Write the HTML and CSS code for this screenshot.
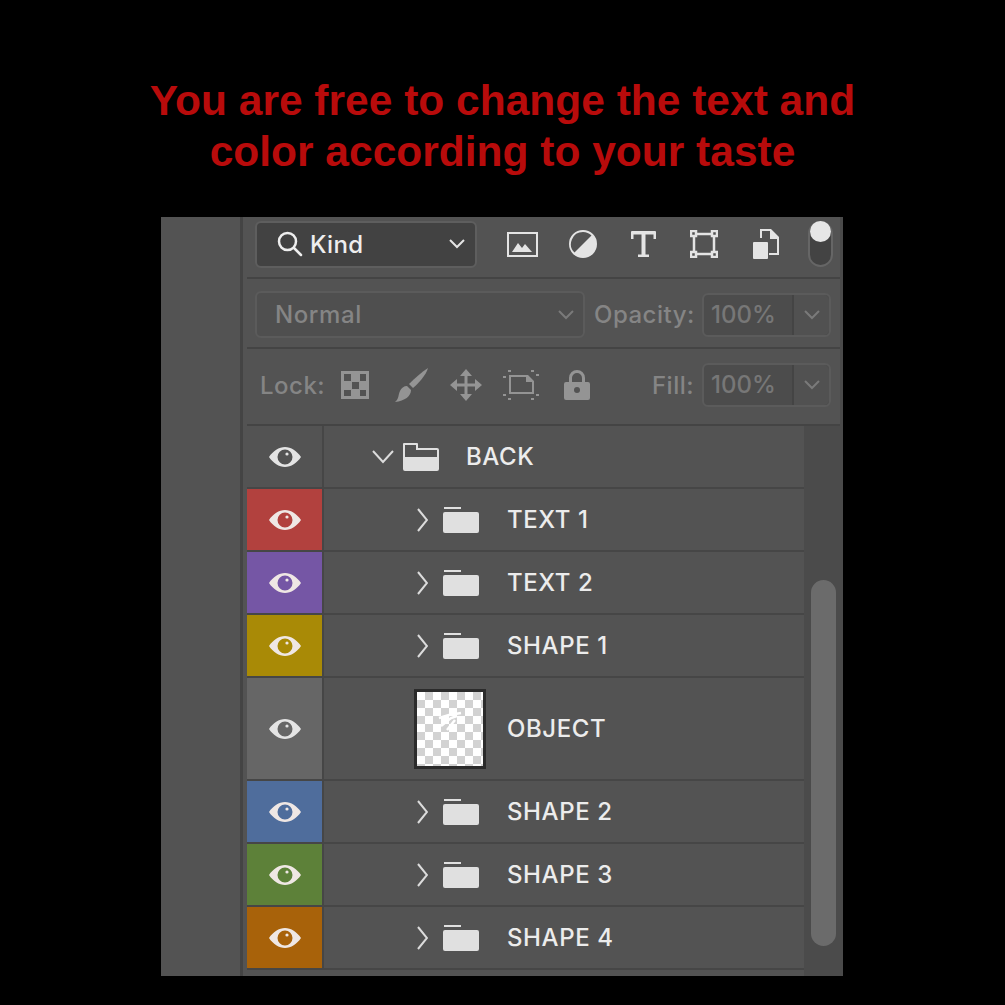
FILE: index.html
```html
<!DOCTYPE html>
<html lang="en">
<head>
  <meta charset="UTF-8">
  <title>Layers panel</title>
  <link rel="stylesheet" href="styles.css">
</head>
<body>

  <!-- Icon symbols -->
  <svg class="defs" width="0" height="0">
    <symbol id="eye" viewBox="0 0 32 20">
      <path fill-rule="evenodd" d="M0 10C4 4 10 0 16 0s12 4 16 10c-4 6-10 10-16 10S4 16 0 10zM16 2.500a7.500 7.500 0 1 0 0 15 7.500 7.500 0 0 0 0-15z"/>
      <circle cx="18" cy="7" r="1.600"/>
    </symbol>
    <symbol id="folder" viewBox="0 0 36 28">
      <path d="M1 1h17v2H1z"/>
      <path d="M2 6h32a2 2 0 0 1 2 2v17a2 2 0 0 1-2 2H2a2 2 0 0 1-2-2V8a2 2 0 0 1 2-2z"/>
    </symbol>
    <symbol id="folder-open" viewBox="0 0 36 28">
      <path fill-rule="evenodd" d="M1 0h13a1 1 0 0 1 1 1v4h19a2 2 0 0 1 2 2v19a2 2 0 0 1-2 2H2a2 2 0 0 1-2-2V1a1 1 0 0 1 1-1zm1 2v12h32V7H13V2z"/>
    </symbol>
  </svg>

  <h1 class="title">You are free to change the text and<br>color according to your taste</h1>

  <div class="panel">
    <div class="side"></div>
    <div class="main">

      <!-- Filter row -->
      <div class="bar bar-filter">
        <div class="select select-kind">
          <svg class="search" viewBox="0 0 26 26" width="26" height="26"><circle cx="10.500" cy="10.500" r="8.500"/><path d="M17 17l7 7"/></svg>
          <span>Kind</span>
          <svg class="caret" viewBox="0 0 16 10" width="16" height="10"><path d="M1 1l7 7 7-7"/></svg>
        </div>
        <div class="filters">
          <div class="cell">
            <svg viewBox="0 0 31 25" width="31" height="25" class="ico"><path fill-rule="evenodd" d="M0 0h31v25H0zM2 2v21h27V2z"/><path d="M5 20l6-9 4 5 3-4 7 8z"/></svg>
          </div>
          <div class="cell">
            <svg viewBox="0 0 28 28" width="28" height="28" class="ico"><path fill-rule="evenodd" d="M14 0a14 14 0 1 1 0 28 14 14 0 0 1 0-28zm0 2a12 12 0 0 0-8.500 20.500L22.500 5.500A12 12 0 0 0 14 2z"/></svg>
          </div>
          <div class="cell">
            <svg viewBox="0 0 25 26" width="25" height="26" class="ico"><path d="M1 0h23a1 1 0 0 1 1 1v7h-2.500V3.500H14.500v20H18V26H7v-2.500h3.500v-20H2.500V8H0V1a1 1 0 0 1 1-1z"/></svg>
          </div>
          <div class="cell">
            <svg viewBox="0 0 28 28" width="28" height="28" class="ico ico-line"><path d="M5 4h18M5 24h18M4 5v18M24 5v18"/><rect x="1" y="1" width="5" height="5"/><rect x="22" y="1" width="5" height="5"/><rect x="1" y="22" width="5" height="5"/><rect x="22" y="22" width="5" height="5"/></svg>
          </div>
          <div class="cell cell-doc">
            <svg viewBox="0 0 26 30" width="26" height="30" class="ico"><path fill-rule="evenodd" d="M7 0h11l8 8v18H16v-2h8V10h-7V2H9v7H7z"/><rect x="0" y="13" width="15" height="17" rx="1"/></svg>
          </div>
        </div>
        <div class="toggle"><div class="knob"></div></div>
      </div>

      <!-- Blend mode row -->
      <div class="bar bar-blend">
        <div class="select select-blend">
          <span>Normal</span>
          <svg class="caret" viewBox="0 0 16 10" width="16" height="10"><path d="M1 1l7 7 7-7"/></svg>
        </div>
        <span class="dim-label label-opacity">Opacity:</span>
        <div class="percent">
          <span class="percent-val">100%</span>
          <span class="percent-btn"><svg class="caret" viewBox="0 0 16 10" width="16" height="10"><path d="M1 1l7 7 7-7"/></svg></span>
        </div>
      </div>

      <!-- Lock row -->
      <div class="bar bar-lock">
        <span class="dim-label">Lock:</span>
        <div class="locks">
          <div class="lock-cell">
            <svg viewBox="0 0 28 28" width="28" height="28" class="lock-ico"><path fill-rule="evenodd" d="M0 0h28v28H0zM3 3v7h7V3zm8 8v7h7v-7zm8-8v7h6V3zM3 19v6h7v-6zm16 0v6h6v-6z"/></svg>
          </div>
          <div class="lock-cell">
            <svg viewBox="0 0 34 34" width="34" height="34" class="lock-ico lock-brush"><path d="M33 0c-2 7-9 15-15 20l-4-4C20 10 27 4 33 0z"/><path d="M12 18l4 4c0 6-6 11-16 12 4-3 3-7 5-11 1-3 4-5 7-5z"/></svg>
          </div>
          <div class="lock-cell">
            <svg viewBox="0 0 32 32" width="32" height="32" class="lock-ico"><path d="M16 0l6 7h-4.500v7.500H25V10l7 6-7 6v-4.500h-7.500V25H22l-6 7-6-7h4.500v-7.500H7V22l-7-6 7-6v4.500h7.500V7H10z"/></svg>
          </div>
          <div class="lock-cell">
            <svg viewBox="0 0 36 30" width="36" height="30" class="lock-ico"><path fill-rule="evenodd" d="M6 5h19l6 6v13H6zm2 2v15h21V12h-6V7z"/><path d="M5 0h3v2H5zM28 0h3v2h-3zM0 6h3v2H0zM33 4h3v2h-3zM0 24h3v2H0zM33 24h3v2h-3zM5 28h3v2H5zM28 28h3v2h-3z"/></svg>
          </div>
          <div class="lock-cell">
            <svg viewBox="0 0 26 30" width="26" height="30" class="lock-ico"><path fill-rule="evenodd" d="M13 0a8 8 0 0 1 8 8v4h3a2 2 0 0 1 2 2v14a2 2 0 0 1-2 2H2a2 2 0 0 1-2-2V14a2 2 0 0 1 2-2h3V8a8 8 0 0 1 8-8zm0 3a5 5 0 0 0-5 5v4h10V8a5 5 0 0 0-5-5zm0 14a3 3 0 1 0 0 6 3 3 0 0 0 0-6z"/></svg>
          </div>
        </div>
        <span class="dim-label label-fill">Fill:</span>
        <div class="percent">
          <span class="percent-val">100%</span>
          <span class="percent-btn"><svg class="caret" viewBox="0 0 16 10" width="16" height="10"><path d="M1 1l7 7 7-7"/></svg></span>
        </div>
      </div>

      <!-- Layers -->
      <div class="layers">
        <div class="list">
          <div class="row">
            <div class="vis"><svg class="eye"><use href="#eye"/></svg></div>
            <div class="layer layer-group">
              <svg class="open" viewBox="0 0 22 14" width="22" height="14"><path d="M1 1l10 11L21 1"/></svg>
              <svg class="folder-open"><use href="#folder-open"/></svg>
              <span class="name">BACK</span>
            </div>
          </div>
          <div class="row">
            <div class="vis vis-red"><svg class="eye"><use href="#eye"/></svg></div>
            <div class="layer">
              <svg class="closed" viewBox="0 0 11 24" width="11" height="24"><path d="M1 1l9 11-9 11"/></svg>
              <svg class="folder"><use href="#folder"/></svg>
              <span class="name">TEXT 1</span>
            </div>
          </div>
          <div class="row">
            <div class="vis vis-purple"><svg class="eye"><use href="#eye"/></svg></div>
            <div class="layer">
              <svg class="closed" viewBox="0 0 11 24" width="11" height="24"><path d="M1 1l9 11-9 11"/></svg>
              <svg class="folder"><use href="#folder"/></svg>
              <span class="name">TEXT 2</span>
            </div>
          </div>
          <div class="row">
            <div class="vis vis-yellow"><svg class="eye"><use href="#eye"/></svg></div>
            <div class="layer">
              <svg class="closed" viewBox="0 0 11 24" width="11" height="24"><path d="M1 1l9 11-9 11"/></svg>
              <svg class="folder"><use href="#folder"/></svg>
              <span class="name">SHAPE 1</span>
            </div>
          </div>
          <div class="row row-object">
            <div class="vis vis-gray"><svg class="eye"><use href="#eye"/></svg></div>
            <div class="layer layer-object">
              <div class="thumb">
                <svg viewBox="0 0 66 74" width="66" height="74" class="scribble"><path d="M22 26l10-3 12-2M24 34l10-8 6-2M30 38l8-10"/></svg>
              </div>
              <span class="name">OBJECT</span>
            </div>
          </div>
          <div class="row">
            <div class="vis vis-blue"><svg class="eye"><use href="#eye"/></svg></div>
            <div class="layer">
              <svg class="closed" viewBox="0 0 11 24" width="11" height="24"><path d="M1 1l9 11-9 11"/></svg>
              <svg class="folder"><use href="#folder"/></svg>
              <span class="name">SHAPE 2</span>
            </div>
          </div>
          <div class="row">
            <div class="vis vis-green"><svg class="eye"><use href="#eye"/></svg></div>
            <div class="layer">
              <svg class="closed" viewBox="0 0 11 24" width="11" height="24"><path d="M1 1l9 11-9 11"/></svg>
              <svg class="folder"><use href="#folder"/></svg>
              <span class="name">SHAPE 3</span>
            </div>
          </div>
          <div class="row">
            <div class="vis vis-orange"><svg class="eye"><use href="#eye"/></svg></div>
            <div class="layer">
              <svg class="closed" viewBox="0 0 11 24" width="11" height="24"><path d="M1 1l9 11-9 11"/></svg>
              <svg class="folder"><use href="#folder"/></svg>
              <span class="name">SHAPE 4</span>
            </div>
          </div>
        </div>
        <div class="scroll"><div class="thumb-bar"></div></div>
      </div>

    </div>
  </div>

</body>
</html>
```

FILE: styles.css
```css
html, body {
  margin: 0;
  height: 100%;
  background: #000;
  overflow: hidden;
}

.defs {
  display: block;
  height: 0;
}

.title {
  margin: 0;
  padding-top: 75px;
  height: 142px;
  font: bold 42.500px/51px "Liberation Sans", Arial, sans-serif;
  color: #b80b0b;
  text-align: center;
}

.panel {
  display: flex;
  width: 682px;
  height: 759px;
  margin-left: 161px;
  background: #535353;
  overflow: hidden;
  font-family: Inter, "Noto Sans", sans-serif;
}

.side {
  width: 79px;
  flex: none;
  border-right: 3px solid #444;
}

.main {
  flex: 1;
  min-width: 0;
  margin-left: 4px;
  display: flex;
  flex-direction: column;
  border-right: 3px solid #4a4a4a;
}

/* top bars */
.bar {
  display: flex;
  align-items: center;
  flex: none;
  box-sizing: border-box;
  border-bottom: 2px solid #444;
  padding-left: 8px;
}

.bar-filter {
  height: 62px;
  padding-bottom: 6px;
}

.bar-blend {
  height: 70px;
  padding-top: 3px;
}

.bar-lock {
  height: 77px;
  padding-left: 13px;
  padding-bottom: 3px;
}

.select {
  display: flex;
  align-items: center;
  box-sizing: border-box;
  height: 47px;
  border-radius: 6px;
  font-size: 24px;
  letter-spacing: 0.3px;
}

.select-kind {
  width: 222px;
  padding: 0 10px 0 20px;
  background: #424242;
  border: 2px solid #5e5e5e;
  color: #eee;
  font-weight: 500;
}

.select-blend {
  width: 330px;
  padding: 0 9px 0 18px;
  background: #4f4f4f;
  border: 2px solid #5b5b5b;
  color: #858585;
  font-weight: 500;
  letter-spacing: 0.6px;
}

.select .caret {
  margin-left: auto;
}

.search {
  margin-right: 7px;
  fill: none;
  stroke: #eee;
  stroke-width: 2.500;
  stroke-linecap: round;
}

.caret {
  fill: none;
  stroke: #e4e4e4;
  stroke-width: 2;
}

.select-blend .caret, .percent .caret {
  stroke: #7a7a7a;
}

.filters {
  display: flex;
  margin-left: 15px;
}

.cell {
  width: 60.500px;
  display: flex;
  align-items: center;
  justify-content: center;
}

.cell-doc {
  margin-left: 2px;
}

.ico {
  fill: #e4e4e4;
}

.ico-line {
  fill: none;
  stroke: #e4e4e4;
  stroke-width: 2.500;
}

.toggle {
  position: relative;
  box-sizing: border-box;
  width: 25px;
  height: 46px;
  margin-left: 11.500px;
  background: #434343;
  border: 2px solid #666;
  border-radius: 13px;
}

.knob {
  position: absolute;
  left: 0;
  top: -2px;
  width: 21px;
  height: 21px;
  border-radius: 50%;
  background: #e6e6e6;
}

.dim-label {
  font-size: 24px;
  font-weight: 500;
  letter-spacing: 0.5px;
  color: #858585;
}

.label-opacity {
  margin-left: 9px;
  width: 108px;
}

.label-fill {
  margin-left: auto;
  margin-right: 8px;
}

.percent {
  display: flex;
  box-sizing: border-box;
  width: 129px;
  height: 44px;
  background: #4c4c4c;
  border: 2px solid #5b5b5b;
  border-radius: 6px;
  color: #777;
  font-size: 24px;
  font-weight: 500;
}

.bar-lock .percent {
  margin-right: 9px;
}

.percent-val {
  width: 90px;
  flex: none;
  padding-left: 7px;
  box-sizing: border-box;
  line-height: 40px;
  border-right: 2px solid #444;
}

.percent-btn {
  flex: 1;
  display: flex;
  align-items: center;
  justify-content: center;
  background: #515151;
  border-radius: 0 5px 5px 0;
}

.locks {
  display: flex;
  margin-left: 2px;
}

.lock-cell {
  width: 55.500px;
  display: flex;
  align-items: center;
  justify-content: center;
}

.lock-ico {
  fill: #949494;
}

.lock-brush {
  margin-left: 4px;
}

/* layer list */
.layers {
  flex: 1;
  display: flex;
  min-height: 0;
}

.list {
  flex: 1;
  min-width: 0;
}

.row {
  display: flex;
  height: 61px;
  border-bottom: 2px solid #464646;
}

.row-object {
  height: 101px;
}

.vis {
  width: 75px;
  flex: none;
  display: flex;
  align-items: center;
  justify-content: center;
  border-right: 2px solid #464646;
}

.eye {
  width: 32px;
  height: 20px;
  fill: #e4e4e4;
}

.vis-red { background: #b2413e; }
.vis-purple { background: #7556a5; }
.vis-yellow { background: #a98a06; }
.vis-gray { background: #666; }
.vis-blue { background: #4f6d9c; }
.vis-green { background: #5d8139; }
.vis-orange { background: #a8620a; }

.vis-red .eye, .vis-purple .eye, .vis-yellow .eye, .vis-blue .eye, .vis-green .eye, .vis-orange .eye {
  fill: #efe7e4;
}

.layer {
  flex: 1;
  display: flex;
  align-items: center;
  padding-left: 93px;
}

.layer-group {
  padding-left: 48px;
}

.layer-object {
  padding-left: 90px;
}

.open, .closed {
  flex: none;
  fill: none;
  stroke: #dcdcdc;
  stroke-width: 2;
}

.closed {
  margin-right: 15px;
}

.open {
  margin-right: 9px;
}

.folder, .folder-open {
  flex: none;
  width: 36px;
  height: 28px;
  fill: #e0e0e0;
}

.folder {
  margin-right: 28px;
}

.folder-open {
  margin-right: 27px;
}

.name {
  font-size: 24px;
  font-weight: 500;
  letter-spacing: 0.6px;
  color: #ececec;
}

.thumb {
  flex: none;
  box-sizing: border-box;
  width: 72px;
  height: 80px;
  margin-right: 21px;
  border: 3px solid #2b2b2b;
  background: repeating-conic-gradient(#d2d2d2 0 25%, #fff 0 50%) 0 0 / 16px 16px;
}

.scribble {
  display: block;
  fill: none;
  stroke: #fff;
  stroke-width: 2.500;
}

.scroll {
  position: relative;
  width: 36px;
  flex: none;
  background: #4b4b4b;
}

.thumb-bar {
  position: absolute;
  left: 7px;
  top: 154px;
  width: 25px;
  height: 366px;
  border-radius: 13px;
  background: #6b6b6b;
}
```
